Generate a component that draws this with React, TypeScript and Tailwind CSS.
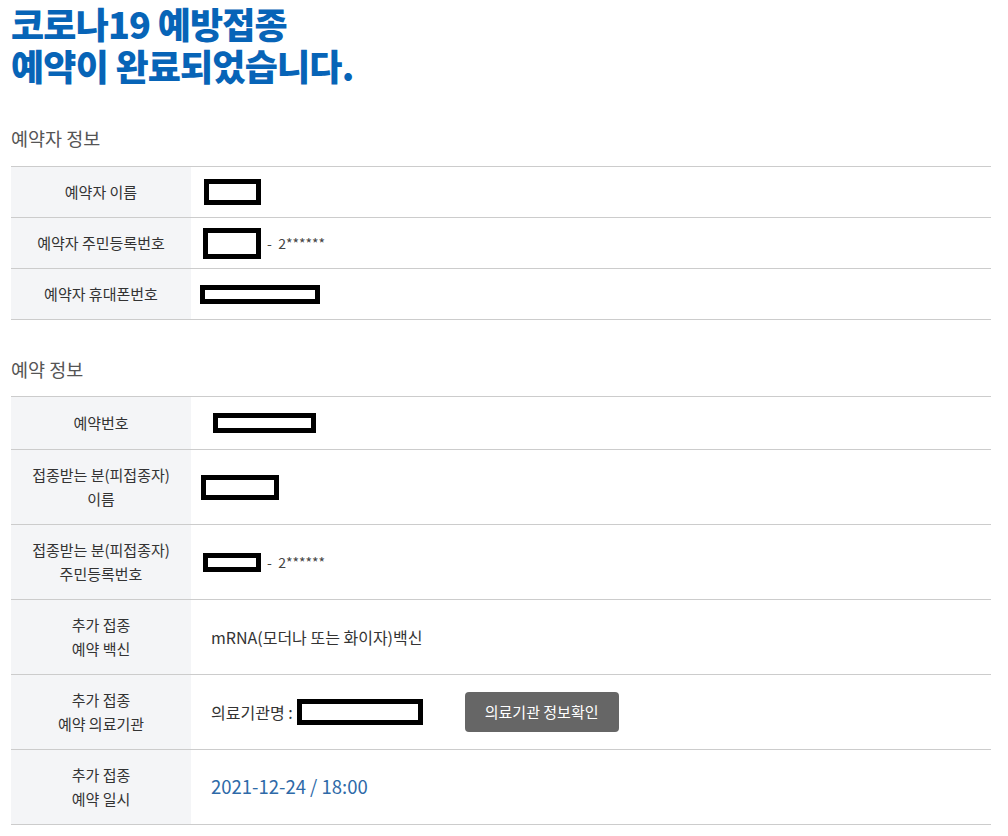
import React from "react";

const font = { fontFamily: '"Noto Sans CJK KR", "Noto Sans", sans-serif' };

function Redact({ w, h, ml }: { w: number; h: number; ml: number }) {
  return (
    <span
      className="inline-block border-[5px] border-black bg-white align-middle"
      style={{ width: w, height: h, marginLeft: ml }}
    />
  );
}

function Row({
  label,
  children,
  h,
}: {
  label: React.ReactNode;
  children: React.ReactNode;
  h: string;
}) {
  return (
    <div className={`flex border-b border-[#cccccc] ${h}`}>
      <div className="flex w-[180px] shrink-0 items-center justify-center bg-[#f4f5f7] text-center text-[15px] leading-[24px] text-[#333333]">
        {label}
      </div>
      <div className="flex flex-1 items-center pl-[20px] text-[16px] text-[#333333]">{children}</div>
    </div>
  );
}

export default function App() {
  return (
    <div className="min-h-[836px] w-[1008px] bg-white" style={font}>
      <div className="ml-[11px] w-[980px]">
        <h1 className="pt-[2px] text-[36px] font-black tracking-[-0.8px] text-[#0764b7]">
          <div className="h-[42px] leading-[42px]">코로나19 예방접종</div>
          <div className="h-[42px] leading-[42px]">예약이 완료되었습니다.</div>
        </h1>

        <h2 className="mt-[39px] text-[18.5px] leading-[26px] text-[#555555]">예약자 정보</h2>
        <div className="mt-[15px] border-t border-[#cccccc]">
          <Row label="예약자 이름" h="h-[51px]">
            <Redact w={57} h={26} ml={-7} />
          </Row>
          <Row label="예약자 주민등록번호" h="h-[51px]">
            <Redact w={58} h={31} ml={-8} />
            <span className="ml-[6px] text-[14px] text-[#444444]">-&nbsp; 2******</span>
          </Row>
          <Row label="예약자 휴대폰번호" h="h-[51px]">
            <Redact w={120} h={19} ml={-11} />
          </Row>
        </div>

        <h2 className="mt-[36px] text-[18.5px] leading-[26px] text-[#555555]">예약 정보</h2>
        <div className="mt-[14px] border-t border-[#cccccc]">
          <Row label="예약번호" h="h-[53px]">
            <Redact w={103} h={20} ml={2} />
          </Row>
          <Row
            label={
              <span>
                접종받는 분(피접종자)
                <br />
                이름
              </span>
            }
            h="h-[75px]"
          >
            <Redact w={78} h={25} ml={-10} />
          </Row>
          <Row
            label={
              <span>
                접종받는 분(피접종자)
                <br />
                주민등록번호
              </span>
            }
            h="h-[75px]"
          >
            <Redact w={58} h={19} ml={-8} />
            <span className="ml-[6px] text-[14px] text-[#444444]">-&nbsp; 2******</span>
          </Row>
          <Row
            label={
              <span>
                추가 접종
                <br />
                예약 백신
              </span>
            }
            h="h-[75px]"
          >
            <span>mRNA(모더나 또는 화이자)백신</span>
          </Row>
          <Row
            label={
              <span>
                추가 접종
                <br />
                예약 의료기관
              </span>
            }
            h="h-[75px]"
          >
            <span>의료기관명 :</span>
            <Redact w={126} h={26} ml={4} />
            <button className="ml-[42px] h-[40px] w-[154px] rounded-[4px] bg-[#666666] text-[15px] text-white">
              의료기관 정보확인
            </button>
          </Row>
          <Row
            label={
              <span>
                추가 접종
                <br />
                예약 일시
              </span>
            }
            h="h-[75px]"
          >
            <span className="text-[18.5px] text-[#2e6aa8]">2021-12-24 / 18:00</span>
          </Row>
        </div>
      </div>
    </div>
  );
}
